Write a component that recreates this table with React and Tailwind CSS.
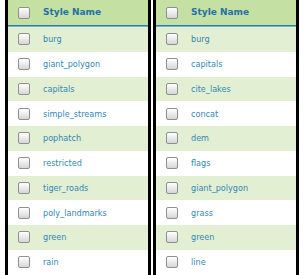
import React from "react";

const left = ["burg", "giant_polygon", "capitals", "simple_streams", "pophatch", "restricted", "tiger_roads", "poly_landmarks", "green", "rain"];
const right = ["burg", "capitals", "cite_lakes", "concat", "dem", "flags", "giant_polygon", "grass", "green", "line"];

function Box() {
  return (
    <span className="block w-[12px] h-[12px] rounded-[2px] border border-[#8f8f8f] bg-gradient-to-b from-white to-[#d6d6d6] shadow-[inset_0_1px_0_#fff]" />
  );
}

function Panel({ names }) {
  return (
    <div className="w-[146px] border-l-[3px] border-r-[3px] border-black flex flex-col">
      <div className="h-[25px] bg-[#c5e0a3] flex items-center pl-[10px]">
        <Box />
        <span className="ml-[13px] text-[9px] font-bold text-[#2271a6]">Style Name</span>
      </div>
      <div className="h-[1px] bg-[#2f7fa8]" />
      <div className="h-[1px] bg-[#6fb0cf]" />
      {names.map((n, i) => (
        <div key={n + i} className={`h-[24.75px] flex items-center pl-[10px] ${i % 2 === 0 ? "bg-[#e2efd3]" : "bg-white"}`}>
          <Box />
          <span className="ml-[13px] text-[8.1px] text-[#3387b5]">{n}</span>
        </div>
      ))}
    </div>
  );
}

export default function App() {
  return (
    <div className="w-[304px] h-[275px] bg-white overflow-hidden flex gap-[2px] pl-[5px]" style={{ fontFamily: '"DejaVu Sans", Verdana, sans-serif' }}>
      <Panel names={left} />
      <Panel names={right} />
    </div>
  );
}
